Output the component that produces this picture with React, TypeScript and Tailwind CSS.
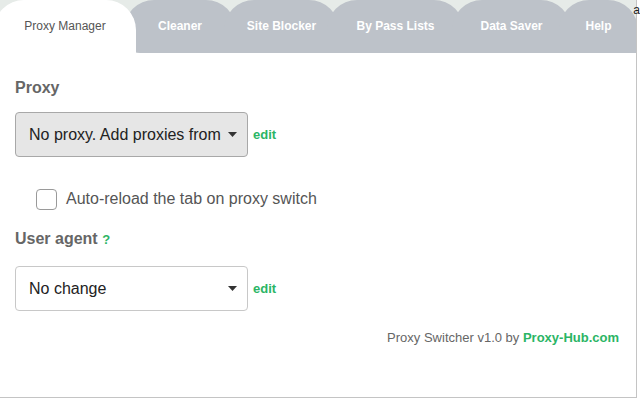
import React from "react";

const tabs = [
  { label: "Cleaner", w: "w-[112px]" },
  { label: "Site Blocker", w: "w-[115px]" },
  { label: "By Pass Lists", w: "w-[137px]" },
  { label: "Data Saver", w: "w-[119px]" },
  { label: "Help", w: "w-[79px]" },
];

function Caret() {
  return (
    <svg width="9" height="5" viewBox="0 0 9 5" className="shrink-0">
      <path d="M0 0h9L4.5 5z" fill="#333" />
    </svg>
  );
}

export default function App() {
  return (
    <div className="relative h-[400px] w-[640px] overflow-hidden bg-white font-['Liberation_Sans',Arial,sans-serif]">
      {/* Page behind the popup */}
      <span className="absolute right-0 top-[3px] text-[12px] leading-[14px] text-[#222]">a</span>

      <div className="flex h-[398px] w-[637px] flex-col overflow-hidden border-b border-r border-[#c4c4c4]">
        {/* Tabs */}
        <div className="flex h-[53px] shrink-0 items-end bg-[linear-gradient(to_bottom,#e6ebe8_62%,#fff_62%)]">
          <div className="relative z-10 -ml-[6px] flex h-[53px] w-[142px] shrink-0 justify-center rounded-t-[30px] bg-white pt-[19px] text-[12px] leading-[14px] text-[#555]">
            Proxy Manager
          </div>
          {tabs.map((t, i) => (
            <div
              key={t.label}
              className={`-ml-[12px] flex h-[53px] shrink-0 justify-center rounded-t-[30px] bg-[#bdc2c9] pt-[19px] text-[12px] font-bold leading-[14px] text-white ${t.w} ${
                i === 0 ? "rounded-bl-[16px]" : ""
              }`}
            >
              {t.label}
            </div>
          ))}
        </div>

        {/* Content */}
        <div className="flex flex-1 flex-col px-[15px]">
          <h2 className="mt-[26px] text-[16px] font-bold leading-[18px] text-[#666]">Proxy</h2>

          <div className="mt-[15px] flex items-center gap-[5px]">
            <div className="flex h-[45px] w-[233px] items-center justify-between rounded-[4px] border border-[#a8a8a8] bg-[#e6e6e6] pl-[13px] pr-[10px] text-[16px] text-[#222]">
              <span>No proxy. Add proxies from</span>
              <Caret />
            </div>
            <a className="text-[13px] font-bold text-[#2bb565]">edit</a>
          </div>

          <label className="ml-[21px] mt-[30px] flex items-center gap-[9px]">
            <span className="h-[21px] w-[21px] rounded-[4px] border border-[#9a9a9a] bg-white" />
            <span className="text-[16px] text-[#555]">Auto-reload the tab on proxy switch</span>
          </label>

          <h2 className="mt-[19px] text-[16px] font-bold leading-[18px] text-[#666]">
            User agent <span className="text-[13px] text-[#2bb565]">?</span>
          </h2>

          <div className="mt-[17px] flex items-center gap-[5px]">
            <div className="flex h-[45px] w-[233px] items-center justify-between rounded-[4px] border border-[#c8c8c8] bg-white pl-[13px] pr-[10px] text-[16px] text-[#222]">
              <span>No change</span>
              <Caret />
            </div>
            <a className="text-[13px] font-bold text-[#2bb565]">edit</a>
          </div>

          <p className="mt-[17px] self-end pr-[2px] text-[13px] text-[#666]">
            Proxy Switcher v1.0 by <span className="font-bold text-[#2bb565]">Proxy-Hub.com</span>
          </p>
        </div>
      </div>
    </div>
  );
}
